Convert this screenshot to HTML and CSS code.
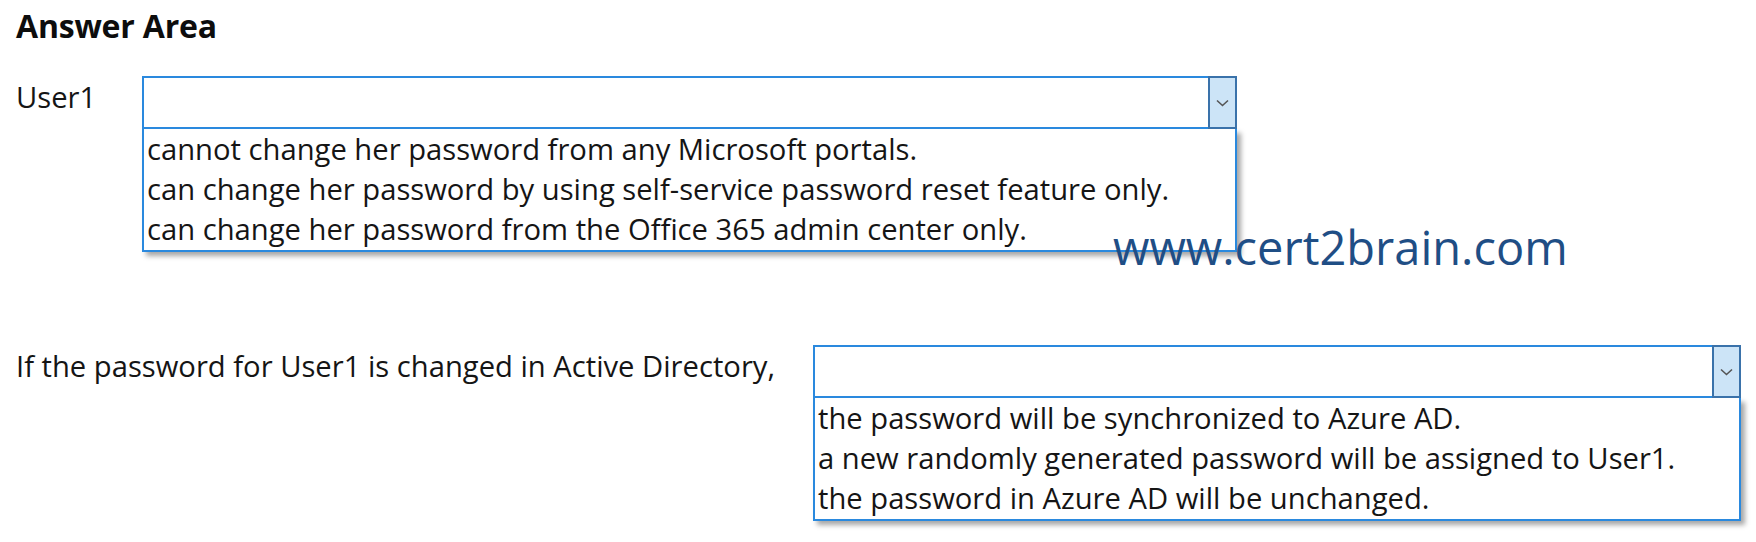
FILE: index.html
```html
<!DOCTYPE html>
<html lang="en">
<head>
<meta charset="utf-8">
<title>Answer Area</title>
<link rel="stylesheet" href="styles.css">
</head>
<body>
<main class="page">
  <h1 class="title">Answer Area</h1>

  <div class="row row-first">
    <div class="label label-first">User1</div>
    <div class="combo combo-first">
      <div class="select">
        <div class="field"></div>
        <div class="arrow">
          <svg width="13" height="8" viewBox="0 0 13 8"><path d="M1 1.5 L6.5 6.5 L12 1.5" fill="none" stroke="#555" stroke-width="1.6"/></svg>
        </div>
      </div>
      <ul class="options">
        <li>cannot change her password from any Microsoft portals.</li>
        <li>can change her password by using self-service password reset feature only.</li>
        <li>can change her password from the Office 365 admin center only.</li>
      </ul>
    </div>
  </div>

  <div class="row row-second">
    <div class="label label-second">If the password for User1 is changed in Active Directory,</div>
    <div class="combo combo-second">
      <div class="select">
        <div class="field"></div>
        <div class="arrow">
          <svg width="13" height="8" viewBox="0 0 13 8"><path d="M1 1.5 L6.5 6.5 L12 1.5" fill="none" stroke="#555" stroke-width="1.6"/></svg>
        </div>
      </div>
      <ul class="options">
        <li>the password will be synchronized to Azure AD.</li>
        <li>a new randomly generated password will be assigned to User1.</li>
        <li>the password in Azure AD will be unchanged.</li>
      </ul>
    </div>
  </div>

  <div class="watermark">www.cert2brain.com</div>
</main>
</body>
</html>
```

FILE: styles.css
```css
html, body {
  margin: 0;
  padding: 0;
  background: #ffffff;
}

.page {
  position: relative;
  width: 1756px;
  height: 542px;
  padding-left: 16px;
  box-sizing: border-box;
  font-family: "Open Sans", "Liberation Sans", sans-serif;
  color: #151515;
  overflow: hidden;
}

.title {
  margin: 0;
  padding-top: 6px;
  font-size: 32px;
  line-height: 40px;
  font-weight: 700;
  letter-spacing: -0.2px;
  color: #0d0d0d;
}

.row {
  display: flex;
  align-items: flex-start;
}

.row-first {
  margin-top: 30px;
}

.row-second {
  margin-top: 93px;
}

.label {
  font-size: 29.2px;
  line-height: 40px;
  padding-top: 1px;
  flex: none;
  white-space: nowrap;
}

.label-first {
  width: 126px;
}

.label-second {
  width: 797px;
}

.combo-first {
  width: 1095px;
}

.combo-second {
  width: 928px;
}

.select {
  display: flex;
  height: 53px;
}

.field {
  flex: 1;
  border: 2px solid #2a89de;
  border-right: none;
}

.arrow {
  width: 25px;
  flex: none;
  background: #cce4f7;
  border: 2px solid #3a72aa;
  display: flex;
  align-items: center;
  justify-content: center;
}

.options {
  list-style: none;
  margin: 0;
  padding: 0 0 1px 3px;
  border: 2px solid #2a89de;
  border-top: none;
  box-shadow: 4px 4px 5px rgba(0, 0, 0, 0.35);
  font-size: 29.2px;
  line-height: 40px;
}

.options li {
  white-space: nowrap;
}

.watermark {
  position: absolute;
  left: 1113px;
  top: 219px;
  font-size: 47px;
  line-height: 56px;
  color: #1f4e85;
}
```
